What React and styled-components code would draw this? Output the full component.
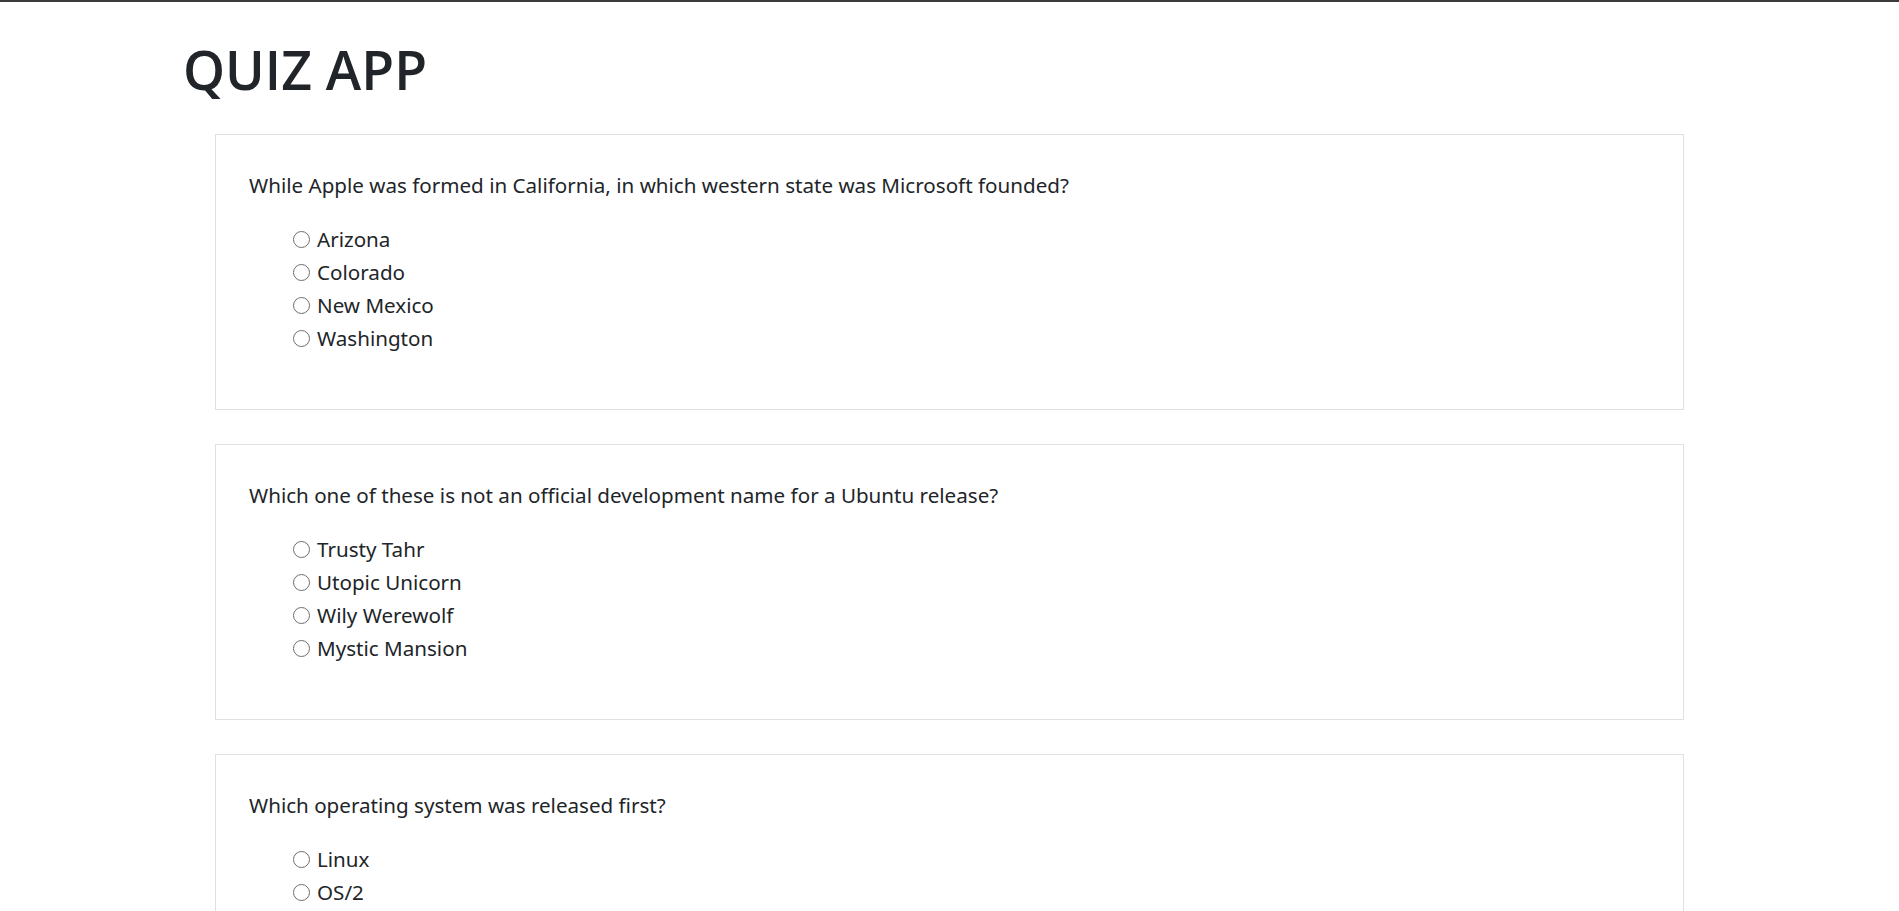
import React from "react";
import styled, { createGlobalStyle } from "styled-components";

const GlobalStyle = createGlobalStyle`
  html, body { margin: 0; padding: 0; background: #ffffff; }
  body {
    font-family: "Noto Sans", "Open Sans", "Liberation Sans", sans-serif;
    color: #212529;
  }
  * { box-sizing: border-box; }
`;

const Page = styled.div`
  border-top: 2px solid #3a3a3a;
  padding: 0 183px 40px;
`;

const Title = styled.h1`
  margin: 35px 0 32px;
  font-family: "Open Sans", "Noto Sans", sans-serif;
  font-size: 53.5px;
  line-height: 65px;
  font-weight: 600;
  letter-spacing: 0;
  color: #212529;
`;

const CardList = styled.div`
  display: flex;
  flex-direction: column;
  gap: 34px;
  padding: 0 32px;
`;

const Card = styled.section`
  border: 1px solid #dfdfe4;
  padding: 34px 33px 33px;
`;

const Question = styled.p`
  margin: 0 0 22px;
  font-size: 20.6px;
  line-height: 32px;
`;

const Options = styled.div`
  display: flex;
  flex-direction: column;
  padding-left: 44px;
  margin-bottom: 21px;
`;

const Option = styled.label`
  display: flex;
  align-items: center;
  gap: 7px;
  height: 33px;
  font-size: 20.6px;
  line-height: 33px;
  cursor: pointer;
`;

const Radio = styled.input.attrs({ type: "radio" })`
  appearance: none;
  -webkit-appearance: none;
  width: 17px;
  height: 17px;
  margin: 0;
  border: 1.5px solid #6e6e6e;
  border-radius: 50%;
  background: #ffffff;
  flex: none;

  &:checked {
    border-color: #0075ff;
    box-shadow: inset 0 0 0 3px #ffffff;
    background: #0075ff;
  }
`;

const questions = [
  {
    q: "While Apple was formed in California, in which western state was Microsoft founded?",
    options: ["Arizona", "Colorado", "New Mexico", "Washington"],
  },
  {
    q: "Which one of these is not an official development name for a Ubuntu release?",
    options: ["Trusty Tahr", "Utopic Unicorn", "Wily Werewolf", "Mystic Mansion"],
  },
  {
    q: "Which operating system was released first?",
    options: ["Linux", "OS/2", "Windows", "Mac OS"],
  },
];

export default function App() {
  return (
    <>
      <GlobalStyle />
      <Page>
        <Title>QUIZ APP</Title>
        <CardList>
          {questions.map((item, qi) => (
            <Card key={qi}>
              <Question>{item.q}</Question>
              <Options>
                {item.options.map((opt) => (
                  <Option key={opt}>
                    <Radio name={`q${qi}`} value={opt} />
                    {opt}
                  </Option>
                ))}
              </Options>
            </Card>
          ))}
        </CardList>
      </Page>
    </>
  );
}
